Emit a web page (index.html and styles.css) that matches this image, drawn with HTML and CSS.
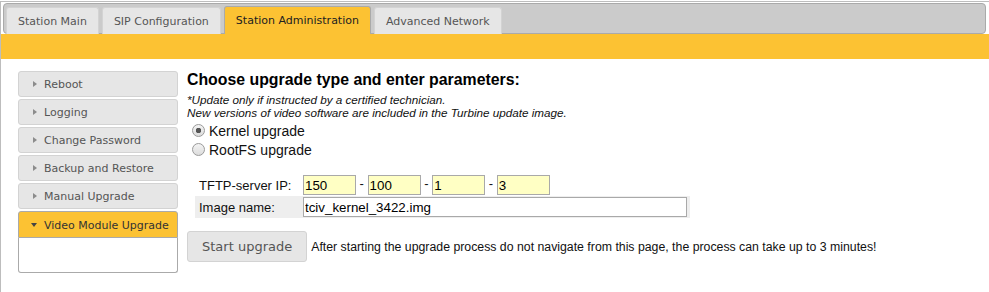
FILE: index.html
```html
<!DOCTYPE html>
<html lang="en">
<head>
    <meta charset="UTF-8">
    <title>Station Administration</title>
    <link rel="stylesheet" href="styles.css">
</head>
<body>
    <div class="page">
        <div class="tabs">
            <a class="tab">Station Main</a>
            <a class="tab">SIP Configuration</a>
            <a class="tab active">Station Administration</a>
            <a class="tab">Advanced Network</a>
        </div>
        <div class="band"></div>

        <div class="layout">
            <ul class="menu">
                <li class="menu-item">Reboot</li>
                <li class="menu-item">Logging</li>
                <li class="menu-item">Change Password</li>
                <li class="menu-item">Backup and Restore</li>
                <li class="menu-item">Manual Upgrade</li>
                <li class="menu-item open">Video Module Upgrade</li>
                <li class="menu-panel"></li>
            </ul>

            <div class="content">
                <h2>Choose upgrade type and enter parameters:</h2>
                <p class="note">*Update only if instructed by a certified technician.<br>New versions of video software are included in the Turbine update image.</p>
                <label class="choice"><input type="radio" name="kind" checked>Kernel upgrade</label>
                <label class="choice"><input type="radio" name="kind">RootFS upgrade</label>

                <table class="params">
                    <tr>
                        <td class="label">TFTP-server IP:</td>
                        <td><input class="ip" type="text" value="150"> - <input class="ip" type="text" value="100"> - <input class="ip" type="text" value="1"> - <input class="ip" type="text" value="3"></td>
                    </tr>
                    <tr class="alt">
                        <td class="label">Image name:</td>
                        <td><input class="file" type="text" value="tciv_kernel_3422.img"></td>
                    </tr>
                </table>

                <div class="actions">
                    <button class="btn">Start upgrade</button>
                    <span class="warning">After starting the upgrade process do not navigate from this page, the process can take up to 3 minutes!</span>
                </div>
            </div>
        </div>
    </div>
</body>
</html>
```

FILE: styles.css
```css
body {
    margin: 0;
    background: #fff;
    font-family: "Liberation Sans", Arial, sans-serif;
    color: #222;
}

.page {
    margin-top: 1px;
    height: 291px;
    box-sizing: border-box;
    border-top: 1px solid #bdbdbd;
    border-left: 1px solid #bdbdbd;
}

/* top tab strip */
.tabs {
    display: flex;
    align-items: flex-end;
    gap: 3px;
    height: 31px;
    box-sizing: border-box;
    margin: 1px 3px 0 2px;
    padding: 0 2px;
    background: #cbcbcb;
    border: 1px solid #aaa;
    border-radius: 4px;
}

.tab {
    height: 26px;
    margin-bottom: -1px;
    padding: 0 11px;
    line-height: 27px;
    font-family: "DejaVu Sans", Verdana, sans-serif;
    font-size: 11px;
    color: #555;
    background: #e6e6e6;
    border: 1px solid #d3d3d3;
    border-bottom: none;
    border-radius: 3px 3px 0 0;
}

.tab.active {
    color: #212121;
    background: #fcc233;
    border-color: #aaa;
    height: 27px;
}

.band {
    height: 25px;
    background: #fcc233;
}

.layout {
    display: flex;
    padding-top: 12px;
}

/* left accordion */
.menu {
    list-style: none;
    margin: 0 0 0 17px;
    padding: 0;
    width: 160px;
}

.menu-item {
    position: relative;
    height: 26px;
    box-sizing: border-box;
    margin-bottom: 2px;
    padding-left: 25px;
    line-height: 26px;
    font-family: "DejaVu Sans", Verdana, sans-serif;
    font-size: 11px;
    color: #555;
    background: #e6e6e6;
    border: 1px solid #d3d3d3;
    border-radius: 3px;
}

.menu-item::before {
    content: "";
    position: absolute;
    left: 14px;
    top: 9px;
    border-style: solid;
    border-width: 3.5px 0 3.5px 4px;
    border-color: transparent transparent transparent #8c8c8c;
}

.menu-item.open {
    height: 27px;
    margin-bottom: 0;
    line-height: 27px;
    color: #333;
    background: #fcc233;
    border-color: #aaa;
    border-radius: 3px 3px 0 0;
}

.menu-item.open::before {
    left: 12px;
    top: 11px;
    border-width: 4px 3.5px 0 3.5px;
    border-color: #444 transparent transparent transparent;
}

.menu-panel {
    height: 35px;
    box-sizing: border-box;
    border: 1px solid #aaa;
    border-top: none;
    border-radius: 0 0 3px 3px;
}

/* upgrade form */
.content {
    margin-left: 9px;
}

.content h2 {
    margin: 0;
    font-size: 15.85px;
    line-height: 18px;
    color: #000;
}

.note {
    margin: 5px 0 2px;
    font-size: 11.7px;
    font-style: italic;
    line-height: 12.5px;
    color: #111;
}

.choice {
    display: block;
    height: 19px;
    line-height: 19px;
    font-size: 14px;
    color: #111;
}

.choice input {
    appearance: none;
    -webkit-appearance: none;
    width: 13px;
    height: 13px;
    box-sizing: border-box;
    margin: 3px 4px 0 5px;
    border: 1px solid #9a9a9a;
    border-radius: 50%;
    background: linear-gradient(#f4f4f4, #dcdcdc);
    vertical-align: -1px;
}

.choice input:checked {
    background: radial-gradient(circle, #555 0, #555 2.5px, transparent 3px), linear-gradient(#f4f4f4, #dcdcdc);
}

.params {
    margin: 15px 0 0 8px;
    width: 495px;
    border-collapse: collapse;
    font-size: 13px;
    color: #111;
}

.params td {
    padding: 1px 3px 1px 0;
    height: 20px;
}

.params td.label {
    width: 105px;
    padding-left: 4px;
}

.params tr.alt {
    background: #eee;
}

.params input {
    height: 20px;
    box-sizing: border-box;
    margin: 0;
    padding: 0 1px;
    font-family: "Liberation Sans", Arial, sans-serif;
    font-size: 13.333px;
    color: #000;
    border: 1px solid #a9a9a9;
    vertical-align: middle;
}

.params input.ip {
    width: 53px;
    background: #ffffc4;
}

.params input.file {
    width: 384px;
    background: #fff;
}

.actions {
    display: flex;
    align-items: center;
    gap: 4px;
    margin-top: 13px;
}

.btn {
    height: 31px;
    padding: 0 14px;
    font-family: "DejaVu Sans", Verdana, sans-serif;
    font-size: 13px;
    color: #555;
    background: #e6e6e6;
    border: 1px solid #d3d3d3;
    border-radius: 3px;
}

.warning {
    font-size: 12.3px;
    color: #111;
}
```
